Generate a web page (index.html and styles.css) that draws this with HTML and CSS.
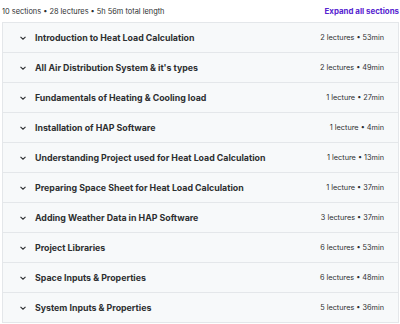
FILE: index.html
```html
<!DOCTYPE html>
<html lang="en">
<head>
    <meta charset="UTF-8">
    <title>Course content</title>
    <link rel="stylesheet" href="styles.css">
</head>
<body>
    <div class="content">
        <div class="header">
            <span class="summary">10 sections • 28 lectures • 5h 56m total length</span>
            <span class="expand">Expand all sections</span>
        </div>

        <div class="sections">
            <div class="section">
                <span class="chev"><svg viewBox="0 0 10 10"><path d="M2.5 3.8 5 6.2 7.5 3.8"/></svg></span>
                <span class="title">Introduction to Heat Load Calculation</span>
                <span class="meta">2 lectures • 53min</span>
            </div>
            <div class="section">
                <span class="chev"><svg viewBox="0 0 10 10"><path d="M2.5 3.8 5 6.2 7.5 3.8"/></svg></span>
                <span class="title">All Air Distribution System &amp; it's types</span>
                <span class="meta">2 lectures • 49min</span>
            </div>
            <div class="section">
                <span class="chev"><svg viewBox="0 0 10 10"><path d="M2.5 3.8 5 6.2 7.5 3.8"/></svg></span>
                <span class="title">Fundamentals of Heating &amp; Cooling load</span>
                <span class="meta">1 lecture • 27min</span>
            </div>
            <div class="section">
                <span class="chev"><svg viewBox="0 0 10 10"><path d="M2.5 3.8 5 6.2 7.5 3.8"/></svg></span>
                <span class="title">Installation of HAP Software</span>
                <span class="meta">1 lecture • 4min</span>
            </div>
            <div class="section">
                <span class="chev"><svg viewBox="0 0 10 10"><path d="M2.5 3.8 5 6.2 7.5 3.8"/></svg></span>
                <span class="title">Understanding Project used for Heat Load Calculation</span>
                <span class="meta">1 lecture • 13min</span>
            </div>
            <div class="section">
                <span class="chev"><svg viewBox="0 0 10 10"><path d="M2.5 3.8 5 6.2 7.5 3.8"/></svg></span>
                <span class="title">Preparing Space Sheet for Heat Load Calculation</span>
                <span class="meta">1 lecture • 37min</span>
            </div>
            <div class="section">
                <span class="chev"><svg viewBox="0 0 10 10"><path d="M2.5 3.8 5 6.2 7.5 3.8"/></svg></span>
                <span class="title">Adding Weather Data in HAP Software</span>
                <span class="meta">3 lectures • 37min</span>
            </div>
            <div class="section">
                <span class="chev"><svg viewBox="0 0 10 10"><path d="M2.5 3.8 5 6.2 7.5 3.8"/></svg></span>
                <span class="title">Project Libraries</span>
                <span class="meta">6 lectures • 53min</span>
            </div>
            <div class="section">
                <span class="chev"><svg viewBox="0 0 10 10"><path d="M2.5 3.8 5 6.2 7.5 3.8"/></svg></span>
                <span class="title">Space Inputs &amp; Properties</span>
                <span class="meta">6 lectures • 48min</span>
            </div>
            <div class="section">
                <span class="chev"><svg viewBox="0 0 10 10"><path d="M2.5 3.8 5 6.2 7.5 3.8"/></svg></span>
                <span class="title">System Inputs &amp; Properties</span>
                <span class="meta">5 lectures • 36min</span>
            </div>
        </div>
    </div>
</body>
</html>
```

FILE: styles.css
```css
body {
    margin: 0;
    background-color: #fff;
    color: #2d2f31;
    font-family: Inter, "Noto Sans", sans-serif;
}
.content {
    padding: 0 1px 0 2px;
}
.header {
    display: flex;
    justify-content: space-between;
    align-items: center;
    height: 22px;
}
.summary {
    font-size: 7.4px;
    color: #2d2f31;
}
.expand {
    font-size: 7.9px;
    font-weight: 700;
    color: #5624d0;
}
.sections {
    border: 1px solid #e4e7ea;
}
.section {
    display: flex;
    align-items: center;
    height: 29px;
    padding: 0 14px 0 15px;
    background-color: #f7f9fa;
    border-bottom: 1px solid #e4e7ea;
}
.section:last-child {
    border-bottom: none;
}
.chev {
    display: flex;
    width: 10px;
    height: 10px;
    margin-right: 7px;
}
.chev svg {
    width: 10px;
    height: 10px;
    fill: none;
    stroke: #2d2f31;
    stroke-width: 1.1;
}
.title {
    flex: 1;
    font-size: 8.8px;
    font-weight: 700;
}
.meta {
    font-size: 7.3px;
    color: #2d2f31;
}
```
